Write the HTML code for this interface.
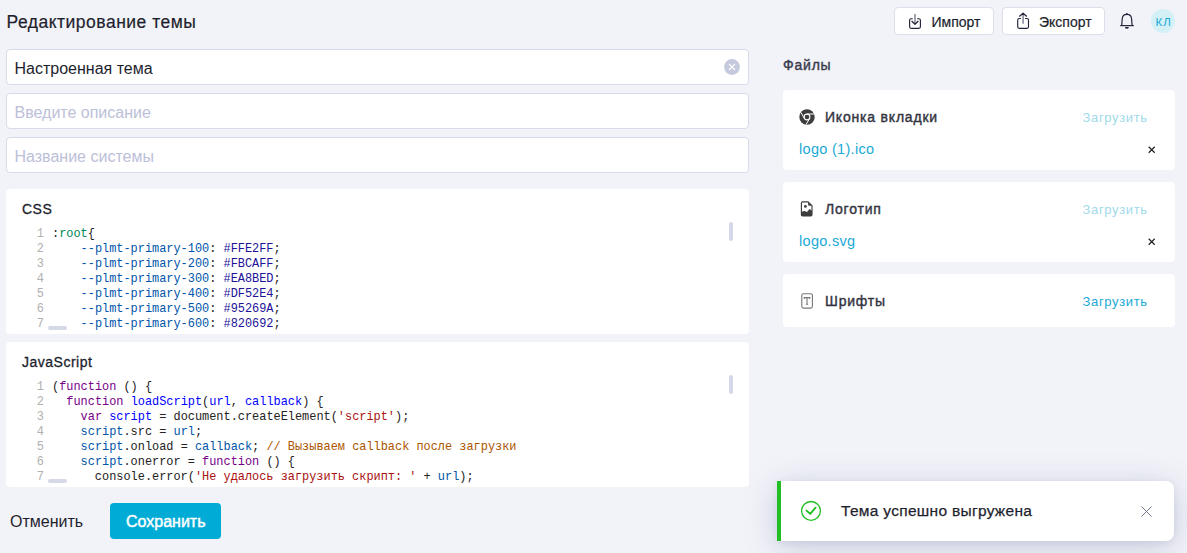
<!DOCTYPE html>
<html><head><meta charset="utf-8">
<style>
*{box-sizing:border-box;margin:0;padding:0}
html,body{width:1187px;height:553px;overflow:hidden;background:#f2f3f9;font-family:"Liberation Sans",sans-serif;color:#1e1f2e}
.abs{position:absolute}
svg.abs{overflow:visible}
.t{position:absolute;white-space:nowrap;line-height:1}
.title{left:6.5px;top:13.5px;font-size:17.5px;letter-spacing:0.5px;-webkit-text-stroke:0.2px #1e1f2e}
.hbtn{position:absolute;top:7px;height:28px;background:#fff;border:1px solid #dcdfeb;border-radius:4px}
.hbtn .t{top:7px;font-size:14px;color:#1e1f2e;-webkit-text-stroke:0.2px #1e1f2e}
.inp{position:absolute;left:6px;width:743px;height:36px;background:#fff;border:1px solid #d8dbe9;border-radius:4px}
.inp .t{left:7.5px;top:11px;font-size:16px}
.ph{color:#bcc0d8}
.panel{position:absolute;left:6px;width:743px;background:#fff;border-radius:4px;overflow:hidden}
.panel .h{left:16px;top:13px;font-size:14px;letter-spacing:0.5px;color:#1e1f2e;-webkit-text-stroke:0.3px #1e1f2e}
.code{position:absolute;left:0;top:38px;font-family:"Liberation Mono",monospace;font-size:11.92px;line-height:15px;color:#222}
.code div{height:15px;position:relative}
.ln{position:absolute;left:24px;width:14px;text-align:right;color:#b0b0b0}
.cl{position:absolute;left:46px;white-space:pre}
.vs{position:absolute;left:723px;top:33px;width:4px;height:19px;border-radius:2px;background:#d5d8e6}
.hs{position:absolute;left:42px;top:137px;width:19px;height:4px;border-radius:2px;background:#d5d8e6}
.card{position:absolute;left:783px;width:392px;background:#fff;border-radius:4px}
.card .n{left:42px;font-size:14px;color:#33343f;-webkit-text-stroke:0.4px #33343f;letter-spacing:0.8px}
.card .up{left:299.5px;font-size:13px;color:#9fdaea;letter-spacing:0.65px}
.card .f{left:16px;font-size:14.5px;color:#1aa9d6;letter-spacing:0.3px}
.kw{color:#708}.df{color:#00f}.v2{color:#05a}.st{color:#a11}.cm{color:#a50}.v3{color:#085}.at{color:#219}
</style></head>
<body>
<div class="t title">Редактирование темы</div>

<div class="hbtn" style="left:894px;width:100px">
  <svg class="abs" style="left:8px;top:0px" width="25" height="25" viewBox="0 0 25 25"><path d="M9.7 10.7H8.1Q6.6 10.7 6.6 12.2V18.8Q6.6 20.3 8.1 20.3H15.9Q17.4 20.3 17.4 18.8V12.2Q17.4 10.7 15.9 10.7H14.2" fill="none" stroke="#22243a" stroke-width="1.15"/><path d="M12 6.1V15.6" stroke="#8a8d9a" stroke-width="1.6"/><path d="M8.6 13L12 16.2L15.4 13" fill="none" stroke="#22243a" stroke-width="1.3" stroke-linejoin="round"/></svg>
  <div class="t" style="left:36.5px">Импорт</div>
</div>
<div class="hbtn" style="left:1002px;width:103px">
  <svg class="abs" style="left:7px;top:0px" width="25" height="25" viewBox="0 0 25 25"><path d="M10.9 10.5H9.2Q7.7 10.5 7.7 12V18.8Q7.7 20.3 9.2 20.3H17Q18.5 20.3 18.5 18.8V12Q18.5 10.5 17 10.5H15.1" fill="none" stroke="#22243a" stroke-width="1.15"/><path d="M13.1 6V15.8" stroke="#8a8d9a" stroke-width="1.6"/><path d="M9.3 8.5L13.1 5.2L16.8 8.5" fill="none" stroke="#22243a" stroke-width="1.3" stroke-linejoin="round"/></svg>
  <div class="t" style="left:36px">Экспорт</div>
</div>
<svg class="abs" style="left:1112px;top:5px" width="30" height="30" viewBox="0 0 30 30"><path d="M9.7 20.6L10.2 14Q10.4 9.3 14.9 9.3Q19.4 9.3 19.6 14L20.1 20.6" fill="none" stroke="#22243a" stroke-width="1.2"/><path d="M8.2 20.6H21.8" stroke="#22243a" stroke-width="1.2"/><circle cx="14.9" cy="8.9" r="0.9" fill="#22243a"/><path d="M13 21.9H16.8A1.9 1.9 0 0 1 13 21.9Z" fill="#22243a"/></svg>
<div class="abs" style="left:1151px;top:9px;width:24px;height:24px;border-radius:50%;background:#d3f0f7"></div>
<div class="t" style="left:1155.5px;top:16.5px;font-size:11.5px;letter-spacing:1.1px;color:#19a9d6">КЛ</div>

<div class="inp" style="top:49px"><div class="t">Настроенная тема</div>
  <svg class="abs" style="left:717px;top:9px" width="16" height="16" viewBox="0 0 16 16"><circle cx="8" cy="8" r="7.9" fill="#c5c9de"/><path d="M5 5L11 11M11 5L5 11" stroke="#fff" stroke-width="1.2"/></svg>
</div>
<div class="inp" style="top:93px"><div class="t ph">Введите описание</div></div>
<div class="inp" style="top:137px"><div class="t ph">Название системы</div></div>

<div class="panel" style="top:189px;height:145px">
  <div class="t h">CSS</div>
  <div class="code">
<div><span class="ln">1</span><span class="cl">:<span class="v3">root</span>{</span></div>
<div><span class="ln">2</span><span class="cl">    <span class="v2">--plmt-primary-100</span>: <span class="at">#FFE2FF</span>;</span></div>
<div><span class="ln">3</span><span class="cl">    <span class="v2">--plmt-primary-200</span>: <span class="at">#FBCAFF</span>;</span></div>
<div><span class="ln">4</span><span class="cl">    <span class="v2">--plmt-primary-300</span>: <span class="at">#EA8BED</span>;</span></div>
<div><span class="ln">5</span><span class="cl">    <span class="v2">--plmt-primary-400</span>: <span class="at">#DF52E4</span>;</span></div>
<div><span class="ln">6</span><span class="cl">    <span class="v2">--plmt-primary-500</span>: <span class="at">#95269A</span>;</span></div>
<div><span class="ln">7</span><span class="cl">    <span class="v2">--plmt-primary-600</span>: <span class="at">#820692</span>;</span></div>
  </div>
  <div class="vs"></div><div class="hs"></div>
</div>

<div class="panel" style="top:342px;height:145px">
  <div class="t h">JavaScript</div>
  <div class="code">
<div><span class="ln">1</span><span class="cl">(<span class="kw">function</span> () {</span></div>
<div><span class="ln">2</span><span class="cl">  <span class="kw">function</span> <span class="df">loadScript</span>(<span class="df">url</span>, <span class="df">callback</span>) {</span></div>
<div><span class="ln">3</span><span class="cl">    <span class="kw">var</span> <span class="df">script</span> = document.createElement(<span class="st">'script'</span>);</span></div>
<div><span class="ln">4</span><span class="cl">    <span class="v2">script</span>.src = <span class="v2">url</span>;</span></div>
<div><span class="ln">5</span><span class="cl">    <span class="v2">script</span>.onload = <span class="v2">callback</span>; <span class="cm">// Вызываем callback после загрузки</span></span></div>
<div><span class="ln">6</span><span class="cl">    <span class="v2">script</span>.onerror = <span class="kw">function</span> () {</span></div>
<div><span class="ln">7</span><span class="cl">      console.error(<span class="st">'Не удалось загрузить скрипт: '</span> + <span class="v2">url</span>);</span></div>
  </div>
  <div class="vs"></div><div class="hs"></div>
</div>

<div class="t" style="left:10px;top:514px;font-size:16px;color:#1e1f2e">Отменить</div>
<div class="abs" style="left:110px;top:503px;width:111px;height:36px;background:#00acd6;border-radius:4px"></div>
<div class="t" style="left:126px;top:514px;font-size:16px;-webkit-text-stroke:0.45px #fff;color:#fff">Сохранить</div>

<div class="t" style="left:783px;top:57.5px;font-size:14px;-webkit-text-stroke:0.4px #3a3b4b;letter-spacing:0.8px;color:#3a3b4b">Файлы</div>

<div class="card" style="top:90px;height:80px">
  <svg class="abs" style="left:16.2px;top:18.8px" width="16" height="16" viewBox="0 0 16 16"><circle cx="8" cy="8" r="7.7" fill="#3d3d3d"/><circle cx="8" cy="8" r="3.4" fill="#fff"/><circle cx="8" cy="8" r="2.3" fill="#3d3d3d"/><path d="M8 5H15.2M5.4 9.5L1.9 3.4M10.6 9.5L7.05 15.6" stroke="#fff" stroke-width="1"/></svg>
  <div class="t n" style="top:20px">Иконка вкладки</div>
  <div class="t up" style="top:21px">Загрузить</div>
  <div class="t f" style="top:52px">logo (1).ico</div>
  <svg class="abs" style="left:364.5px;top:55.5px" width="8" height="8" viewBox="0 0 8 8"><path d="M.7 .7L6.7 6.7M6.7 .7L.7 6.7" stroke="#222" stroke-width="1.25"/></svg>
</div>
<div class="card" style="top:182px;height:80px">
  <svg class="abs" style="left:12px;top:14px" width="25" height="25" viewBox="0 0 25 25"><path d="M7.5 5.8H13.1L17 9.7V18.7Q17 19.9 15.8 19.9H7.5Q6.4 19.9 6.4 18.7V7Q6.4 5.8 7.5 5.8Z" fill="#fff" stroke="#3d3d3d" stroke-width="1.15"/><path d="M13.1 5.8V8.4Q13.1 9.7 14.4 9.7H17Z" fill="#3d3d3d"/><circle cx="10.4" cy="10.4" r="1.4" fill="#3d3d3d"/><path d="M6.4 15.7L9.7 15.1L12 16L14.5 13.1L17 14.8V19.9H6.4Z" fill="#3d3d3d"/></svg>
  <div class="t n" style="top:20px">Логотип</div>
  <div class="t up" style="top:21px">Загрузить</div>
  <div class="t f" style="top:52px">logo.svg</div>
  <svg class="abs" style="left:364.5px;top:55.5px" width="8" height="8" viewBox="0 0 8 8"><path d="M.7 .7L6.7 6.7M6.7 .7L.7 6.7" stroke="#222" stroke-width="1.25"/></svg>
</div>
<div class="card" style="top:274px;height:53px">
  <svg class="abs" style="left:12px;top:14px" width="25" height="25" viewBox="0 0 25 25"><rect x="6.8" y="5.7" width="10.6" height="14.4" rx="1.6" fill="none" stroke="#777" stroke-width="1.1"/><path d="M9.3 10.9V9.6H14.7V10.9M12 9.6V16.2M10.8 16.2H13.2" fill="none" stroke="#777" stroke-width="1.1"/></svg>
  <div class="t n" style="top:20px">Шрифты</div>
  <div class="t up" style="top:21px;color:#1aa9d6">Загрузить</div>
</div>

<div class="abs" style="left:777px;top:481px;width:397px;height:60px;background:#fff;border-radius:0 8px 8px 0;border-left:4px solid #22bf22;box-shadow:0 2px 6px rgba(110,118,160,.12),0 6px 32px rgba(110,118,160,.32)">
  <svg class="abs" style="left:17px;top:17px" width="26" height="26" viewBox="0 0 26 26"><circle cx="13" cy="12.9" r="9.4" fill="none" stroke="#22bf22" stroke-width="1.3"/><path d="M8.6 12.6L12.2 15.9L17.5 9.7" fill="none" stroke="#22bf22" stroke-width="1.9" stroke-linecap="round" stroke-linejoin="round"/></svg>
  <div class="t" style="left:60px;top:21.5px;font-size:15.5px;letter-spacing:0.3px;color:#1e1f2e;-webkit-text-stroke:0.25px #1e1f2e">Тема успешно выгружена</div>
  <svg class="abs" style="left:360px;top:25px" width="11" height="11" viewBox="0 0 11 11"><path d="M.5 .5L10.5 10.5M10.5 .5L.5 10.5" stroke="#70758f" stroke-width="1"/></svg>
</div>
</body></html>
